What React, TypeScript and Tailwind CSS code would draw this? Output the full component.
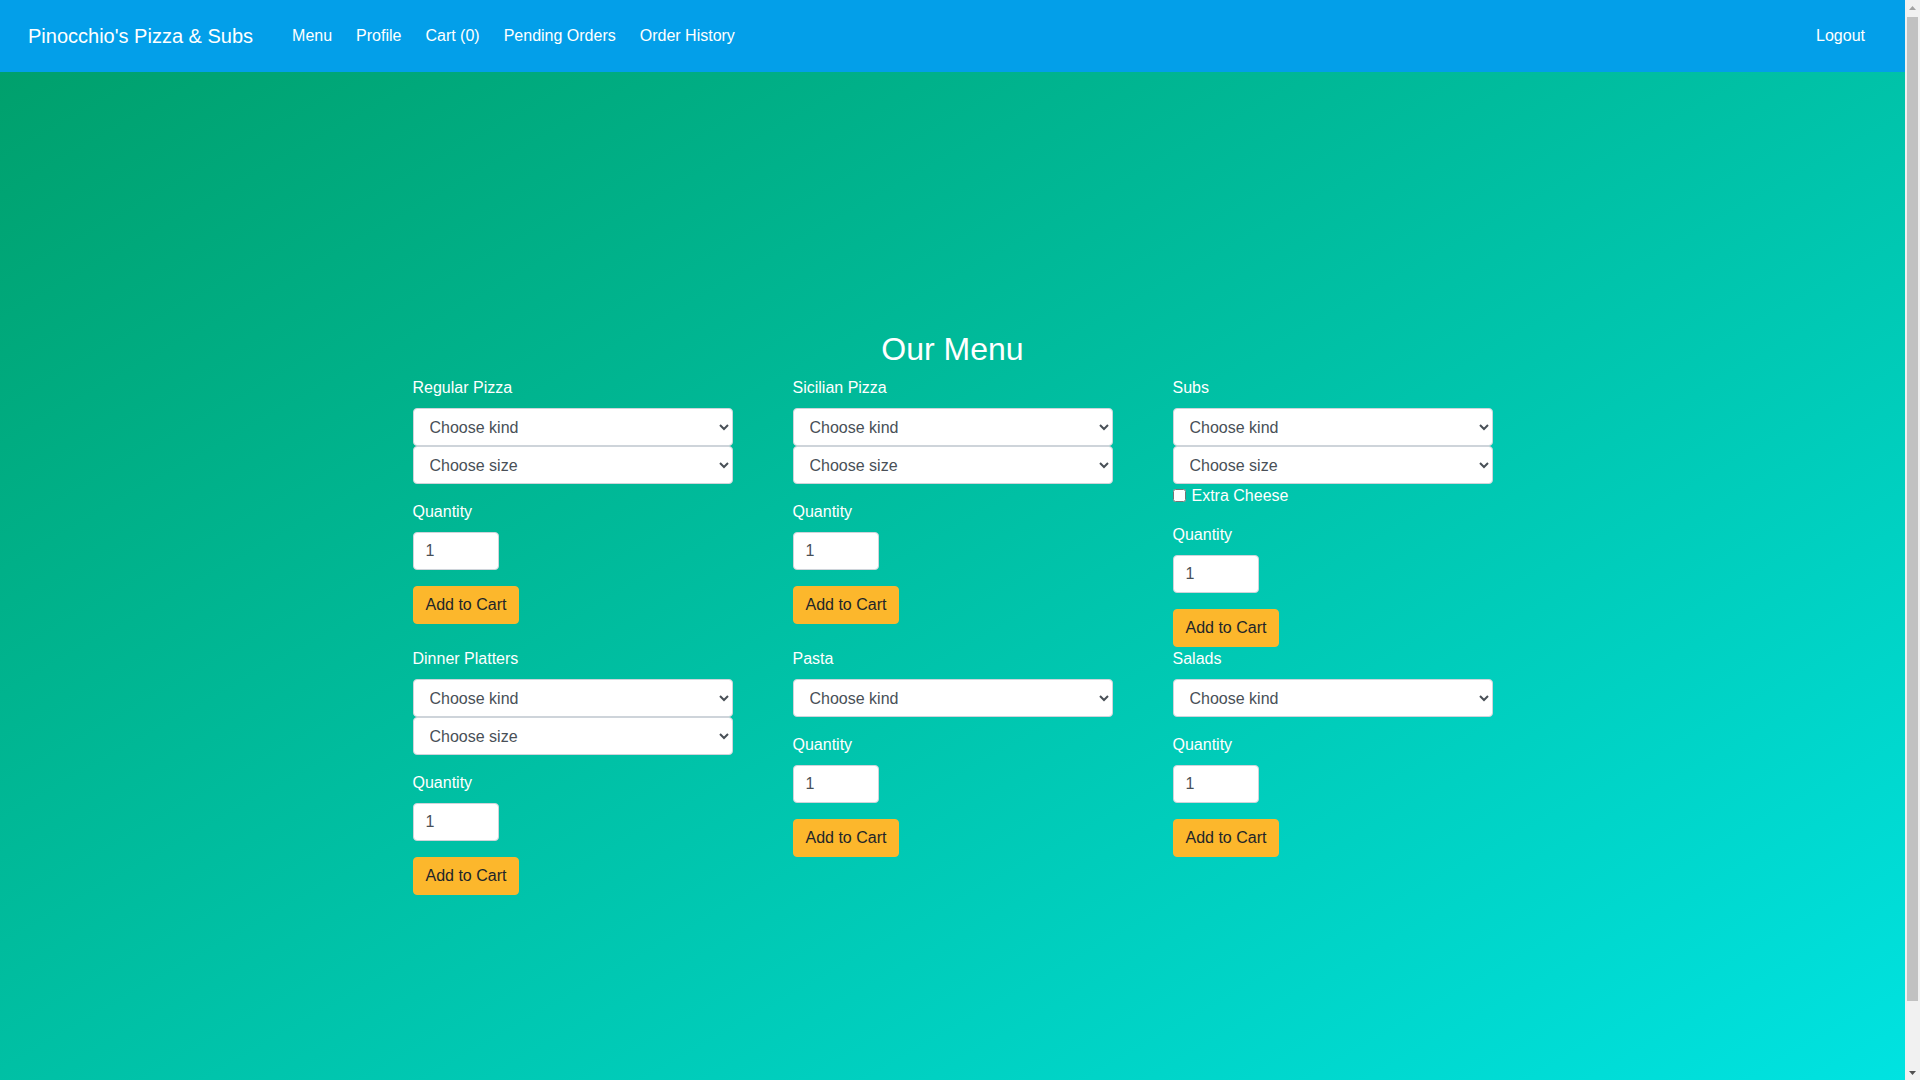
import React from 'react'

type Section = {
  title: string
  size?: boolean
  cheese?: boolean
}

const rowOne: Section[] = [
  { title: 'Regular Pizza', size: true },
  { title: 'Sicilian Pizza', size: true },
  { title: 'Subs', size: true, cheese: true },
]

const rowTwo: Section[] = [
  { title: 'Dinner Platters', size: true },
  { title: 'Pasta' },
  { title: 'Salads' },
]

const selectClass =
  'block w-full h-[38px] bg-white border border-[#ced4da] rounded-[4px] pl-3 pr-2 text-base text-[#495057] leading-6'

function MenuItem({ section }: { section: Section }) {
  return (
    <form className="flex flex-col" onSubmit={(e) => e.preventDefault()}>
      <label className="block h-6 leading-6 text-white mb-2">{section.title}</label>
      <select className={selectClass} defaultValue="">
        <option value="">Choose kind</option>
      </select>
      {section.size && (
        <select className={selectClass} defaultValue="">
          <option value="">Choose size</option>
        </select>
      )}
      {section.cheese && (
        <div className="flex items-center h-[23px]">
          <input type="checkbox" className="m-0 w-[13px] h-[13px]" />
          <span className="ml-[6px] text-white leading-6">Extra Cheese</span>
        </div>
      )}
      <label className="block h-6 leading-6 text-white mt-4 mb-2">Quantity</label>
      <input
        type="number"
        defaultValue={1}
        className="block w-[86px] h-[38px] bg-white border border-[#ced4da] rounded-[4px] px-3 text-base text-[#495057]"
      />
      <div className="mt-4">
        <button
          type="submit"
          className="h-[38px] px-3 border border-[#fcb72c] bg-[#fcb72c] rounded-[4px] text-base leading-6 text-[#212529]"
        >
          Add to Cart
        </button>
      </div>
    </form>
  )
}

// classic page scrollbar, as it shows in the screenshot
function Scrollbar() {
  return (
    <div className="w-[15px] shrink-0 h-screen bg-[#f1f1f1] flex flex-col">
      <div className="h-[15px] flex items-center justify-center">
        <svg width="7" height="4" viewBox="0 0 7 4">
          <path d="M0 4 L3.5 0 L7 4 Z" fill="#a3a3a3" />
        </svg>
      </div>
      <div className="flex-1 px-[2px] pt-[2px]">
        <div className="h-[984px] bg-[#c1c1c1]" />
      </div>
      <div className="h-[15px] flex items-center justify-center">
        <svg width="7" height="4" viewBox="0 0 7 4">
          <path d="M0 0 L7 0 L3.5 4 Z" fill="#505050" />
        </svg>
      </div>
    </div>
  )
}

export default function App() {
  const links = ['Menu', 'Profile', 'Cart (0)', 'Pending Orders', 'Order History']

  return (
    <div className="h-screen flex overflow-hidden font-['Liberation_Sans',Arial,sans-serif] text-base">
      <div className="flex-1 min-w-0 h-screen overflow-hidden">
        <nav className="h-[72px] bg-[#039fe9] flex items-center px-[28px]">
          <span className="text-white text-xl mr-[27px]">Pinocchio's Pizza &amp; Subs</span>
          <ul className="flex items-center">
            {links.map((l) => (
              <li key={l}>
                <a className="px-3 text-white">{l}</a>
              </li>
            ))}
          </ul>
          <div className="ml-auto">
            <a className="px-3 text-white">Logout</a>
          </div>
        </nav>

        <main className="min-h-screen bg-[linear-gradient(to_bottom_right,#00a06c,#00e5e5)] pt-[258px]">
          <div className="w-[1080px] mx-auto">
            <h2 className="text-center text-white text-[32px] leading-[1.2] mb-2">Our Menu</h2>
            <div className="grid grid-cols-3 gap-x-[60px]">
              {rowOne.map((s) => (
                <MenuItem key={s.title} section={s} />
              ))}
              {rowTwo.map((s) => (
                <MenuItem key={s.title} section={s} />
              ))}
            </div>
          </div>
        </main>
      </div>
      <Scrollbar />
    </div>
  )
}
